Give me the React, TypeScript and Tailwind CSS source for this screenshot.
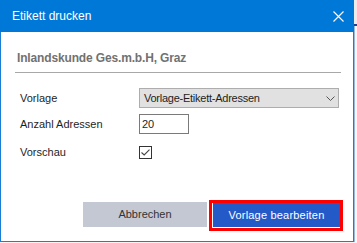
import React from "react";

export default function App() {
  return (
    <div
      className="w-[357px] h-[243px] bg-[#f4f4f4] flex flex-col overflow-hidden"
      style={{ fontFamily: '"Liberation Sans", Arial, sans-serif' }}
    >
      <div className="flex h-[242px]">
        <div className="w-[354px] h-[242px] flex flex-col bg-white border-l border-r border-b border-[#1a7fd4]">
          {/* Title bar */}
          <div className="h-[32px] -mx-px bg-[#0078d7] flex items-center justify-between pl-[12px] pr-[10px] shrink-0">
            <span className="text-white text-[12px] leading-none">Etikett drucken</span>
            <svg width="11" height="11" viewBox="0 0 11 11" className="mt-px">
              <path d="M0.5 0.5 L10.5 10.5 M10.5 0.5 L0.5 10.5" stroke="white" strokeWidth="1.1" fill="none" />
            </svg>
          </div>

          {/* Customer name */}
          <div className="mt-[16px] h-[20px] flex items-center pl-[16px]">
            <span className="text-[12px] font-bold text-[#717171] tracking-[-0.15px]">
              Inlandskunde Ges.m.b.H, Graz
            </span>
          </div>
          <div className="mt-[4px] ml-[14px] w-[326px] h-px bg-[#a8a8a8]" />

          {/* Vorlage */}
          <div className="mt-[15px] h-[20px] flex items-center pl-[19px]">
            <span className="w-[119px] text-[11px] text-[#1e1e1e]">Vorlage</span>
            <div className="w-[200px] h-[20px] bg-[#e1e1e1] border border-[#adadad] flex items-center justify-between pl-[4px] pr-[3px]">
              <span className="text-[11px] text-[#1e1e1e] tracking-[-0.25px]">Vorlage-Etikett-Adressen</span>
              <svg width="9" height="5" viewBox="0 0 9 5">
                <path d="M0.5 0.5 L4.5 4.5 L8.5 0.5" stroke="#555" strokeWidth="1" fill="none" />
              </svg>
            </div>
          </div>

          {/* Anzahl Adressen */}
          <div className="mt-[6px] h-[20px] flex items-center pl-[19px]">
            <span className="w-[119px] text-[11px] text-[#1e1e1e]">Anzahl Adressen</span>
            <div className="w-[50px] h-[20px] border border-[#7a7a7a] bg-white flex items-center pl-[2px]">
              <span className="text-[11px] text-[#1e1e1e]">20</span>
            </div>
          </div>

          {/* Vorschau */}
          <div className="mt-[8px] h-[20px] flex items-center pl-[19px]">
            <span className="w-[119px] text-[11px] text-[#1e1e1e]">Vorschau</span>
            <div className="w-[13px] h-[13px] border border-[#333] bg-white flex items-center justify-center">
              <svg width="9" height="7" viewBox="0 0 9 7">
                <path d="M0.5 3.5 L3.2 6 L8.5 0.7" stroke="#444" strokeWidth="1.1" fill="none" />
              </svg>
            </div>
          </div>

          {/* Buttons */}
          <div className="mt-[38px] flex items-start justify-end pr-[10px] gap-[2px]">
            <div className="mt-[2px] w-[124px] h-[25px] bg-[#c4c8d3] flex items-center justify-center">
              <span className="text-[11px] text-[#333]">Abbrechen</span>
            </div>
            <div className="w-[134px] h-[31px] border-[3px] border-[#ff0000] bg-white pl-px pb-px">
              <div className="w-full h-full bg-[#245ac8] flex items-center justify-center">
                <span className="text-[11px] text-white tracking-[0.2px]">Vorlage bearbeiten</span>
              </div>
            </div>
          </div>
        </div>
        {/* Underlying window sliver */}
        <div className="flex-1 flex flex-col">
          <div className="h-[24px] bg-[#ececec]" />
          <div className="h-[2px] bg-[#1f3f8f]" />
          <div className="flex-1 bg-[#f7f7f7] border-l border-[#9ab8d8]" />
        </div>
      </div>
      <div className="h-px bg-[#f4f4f4]" />
    </div>
  );
}
